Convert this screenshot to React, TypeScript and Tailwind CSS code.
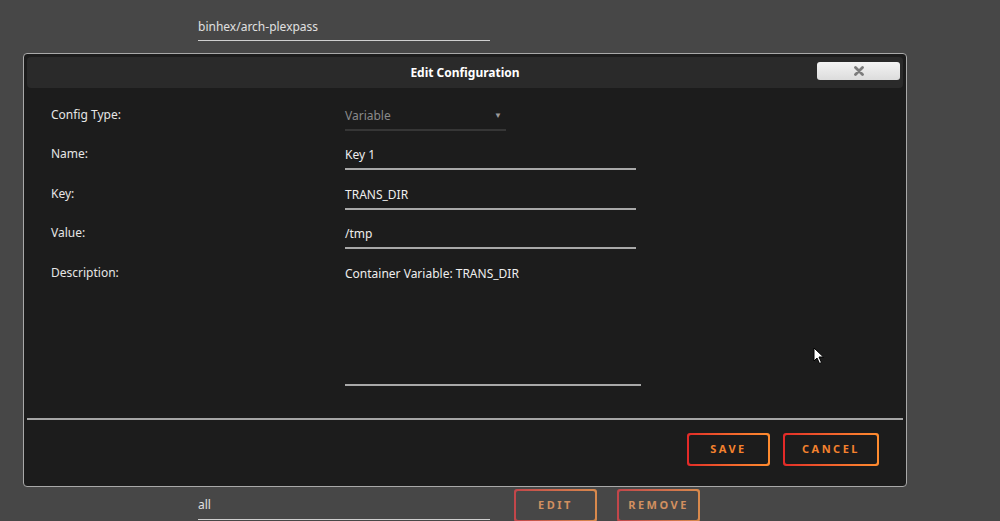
const fields = [
  { label: 'Name:', value: 'Key 1', gap: 'mt-[9px]' },
  { label: 'Key:', value: 'TRANS_DIR', gap: 'mt-[10px]' },
  { label: 'Value:', value: '/tmp', gap: 'mt-[9px]' },
];

function GradientButton({ label, width, dim }: { label: string; width: string; dim?: boolean }) {
  return (
    <div
      className={`${width} h-[33px] rounded-[3px] p-[2px] ${
        dim ? 'bg-gradient-to-r from-[#c2454a] to-[#d98a4c]' : 'bg-gradient-to-r from-[#e22828] to-[#ff8c2f]'
      }`}
    >
      <div
        className={`h-full w-full rounded-[2px] flex items-center justify-center text-[11px] font-bold tracking-[2.5px] ${
          dim ? 'bg-[#474747] text-[#d29060]' : 'bg-[#1c1c1c] text-[#f5822e]'
        }`}
      >
        {label}
      </div>
    </div>
  );
}

function Cursor() {
  return (
    <svg className="absolute left-[813px] top-[347px]" width="12" height="18" viewBox="0 0 12 18">
      <path d="M1 1 L1 14 L4 11 L6.5 16.5 L8.5 15.5 L6 10 L10.5 10 Z" fill="#fff" stroke="#000" strokeWidth="1" />
    </svg>
  );
}

export default function App() {
  return (
    <div
      className="relative h-[521px] w-[1000px] overflow-hidden bg-[#474747] text-[12px] text-[#e6e6e6]"
      style={{ fontFamily: '"Noto Sans", "Open Sans", sans-serif' }}
    >
      {/* Repository field behind the dialog */}
      <div className="pl-[198px] pt-[13px]">
        <div className="w-[292px] h-[28px] border-b border-[#cfcfcf] flex items-center text-[#e0e0e0]">
          binhex/arch-plexpass
        </div>
      </div>

      {/* Edit Configuration dialog */}
      <div className="ml-[23px] mt-[12px] w-[884px] h-[434px] rounded-[4px] border border-[#a9a9a9] bg-[#1c1c1c] p-[3px] flex flex-col">
        <div className="relative h-[31px] rounded-[4px] bg-[#2a2a2a] flex items-center justify-center font-bold text-white">
          Edit Configuration
          <button className="absolute right-[3px] top-[5px] w-[83px] h-[18px] rounded-[3px] bg-gradient-to-b from-[#f4f4f4] to-[#dcdcdc] flex items-center justify-center">
            <svg width="10" height="10" viewBox="0 0 10 10">
              <path d="M1.5 1.5 L8.5 8.5 M8.5 1.5 L1.5 8.5" stroke="#7c7c7c" strokeWidth="2.8" strokeLinecap="round" />
            </svg>
          </button>
        </div>

        <div className="pl-[24px] pt-[13px] flex flex-col">
          <div className="flex">
            <div className="w-[294px] h-[28px] flex items-center">Config Type:</div>
            <div className="w-[161px] h-[30px] border-b-2 border-[#363636] flex items-start pt-[6px] justify-between text-[#8a8a8a]">
              <span>Variable</span>
              <span className="text-[8px] mr-[4px] mt-[2px] text-[#9a9a9a]">▼</span>
            </div>
          </div>
          {fields.map((f) => (
            <div key={f.label} className={`flex ${f.gap}`}>
              <div className="w-[294px] h-[28px] flex items-center">{f.label}</div>
              <div className="w-[291px] h-[30px] border-b-2 border-[#a8a8a8] flex items-start pt-[6px] text-[#eeeeee]">
                {f.value}
              </div>
            </div>
          ))}
          <div className="flex mt-[10px]">
            <div className="w-[294px] h-[28px] flex items-center">Description:</div>
            <div className="w-[296px] h-[127px] border-b-2 border-[#a8a8a8] pt-[6px] text-[#eeeeee]">
              Container Variable: TRANS_DIR
            </div>
          </div>
        </div>

        <div className="mt-[32px] h-[2px] bg-[#a6a6a6]" />

        <div className="flex justify-end gap-[13px] pr-[24px] pt-[13px]">
          <GradientButton label="SAVE" width="w-[83px]" />
          <GradientButton label="CANCEL" width="w-[96px]" />
        </div>
      </div>

      {/* Network type row behind the dialog */}
      <div className="flex items-start pl-[198px] pt-[2px]">
        <div className="w-[292px] h-[30px] mt-[1px] border-b border-[#cfcfcf] flex items-center text-[#e0e0e0]">
          all
        </div>
        <div className="flex gap-[20px] ml-[24px]">
          <GradientButton label="EDIT" width="w-[83px]" dim />
          <GradientButton label="REMOVE" width="w-[83px]" dim />
        </div>
      </div>

      <Cursor />
    </div>
  );
}
